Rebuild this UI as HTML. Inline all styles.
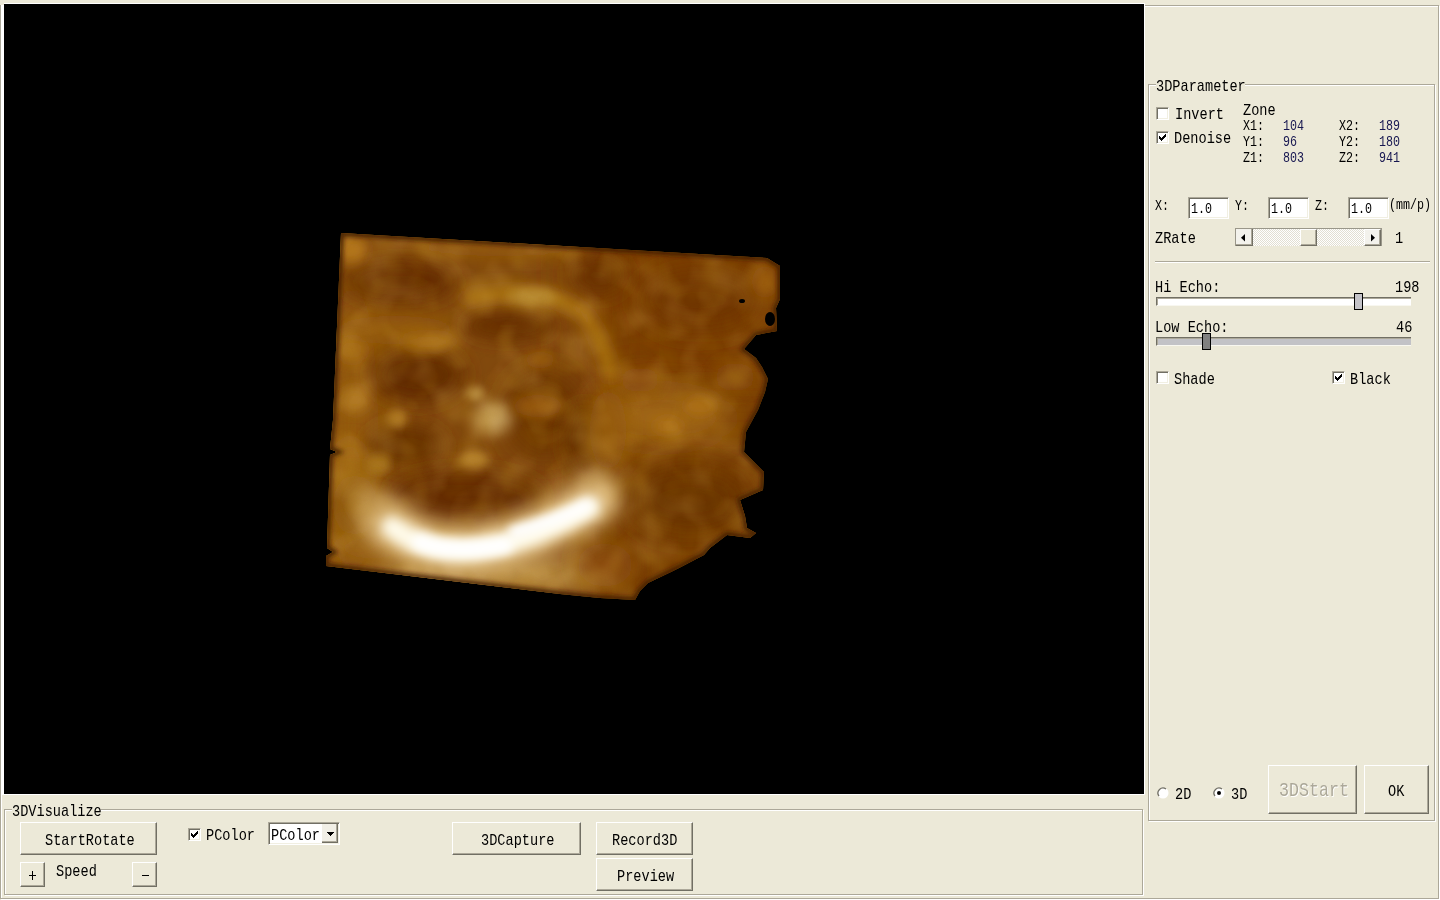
<!DOCTYPE html><html><head><meta charset="utf-8"><style>
html,body{margin:0;padding:0}
body{width:1440px;height:900px;position:relative;overflow:hidden;background:#ECE9D8;font-family:"Liberation Mono",monospace}
body>div,body>svg{position:absolute}
.t{white-space:pre;transform-origin:0 0}
</style></head><body>
<div style="left:1px;top:6px;width:1439px;height:894px;border:1px solid #fff;box-sizing:border-box"></div>
<div style="left:0px;top:5px;width:1439px;height:894px;border:1px solid #ACA899;box-sizing:border-box"></div>
<div style="left:4px;top:3px;width:1141px;height:792px;background:#fff"></div>
<div style="left:1px;top:5px;width:3px;height:790px;background:#fff"></div>
<div style="left:4px;top:4px;width:1140px;height:790px;background:#000"></div>
<svg style="left:300px;top:200px" width="520" height="440" viewBox="300 200 520 440">
<defs>
<clipPath id="vc"><polygon points="341,233 767,258 780,266 780,299 776,308 777,331 756,335 744,349 756,358 762,367 768,379 765,392 758,410 746,432 744,452 764,472 763,490 740,500 745,516 747,528 756,533 750,538 727,535 710,548 704,555 681,567 671,572 648,583 640,591 635,600 600,598 560,594 326,566 326,556 333,552 327,548 330,455 337,452 330,449 333,420"/></clipPath>
<filter id="f36" filterUnits="userSpaceOnUse" x="300" y="200" width="520" height="440"><feGaussianBlur stdDeviation="36"/></filter>
<filter id="f14" filterUnits="userSpaceOnUse" x="300" y="200" width="520" height="440"><feGaussianBlur stdDeviation="14"/></filter>
<filter id="f12" filterUnits="userSpaceOnUse" x="300" y="200" width="520" height="440"><feGaussianBlur stdDeviation="12"/></filter>
<filter id="f11" filterUnits="userSpaceOnUse" x="300" y="200" width="520" height="440"><feGaussianBlur stdDeviation="11"/></filter>
<filter id="f10" filterUnits="userSpaceOnUse" x="300" y="200" width="520" height="440"><feGaussianBlur stdDeviation="10"/></filter>
<filter id="f9" filterUnits="userSpaceOnUse" x="300" y="200" width="520" height="440"><feGaussianBlur stdDeviation="9"/></filter>
<filter id="f8" filterUnits="userSpaceOnUse" x="300" y="200" width="520" height="440"><feGaussianBlur stdDeviation="8"/></filter>
<filter id="f7" filterUnits="userSpaceOnUse" x="300" y="200" width="520" height="440"><feGaussianBlur stdDeviation="7"/></filter>
<filter id="f6" filterUnits="userSpaceOnUse" x="300" y="200" width="520" height="440"><feGaussianBlur stdDeviation="6"/></filter>
<filter id="f5" filterUnits="userSpaceOnUse" x="300" y="200" width="520" height="440"><feGaussianBlur stdDeviation="5"/></filter>
<filter id="f4" filterUnits="userSpaceOnUse" x="300" y="200" width="520" height="440"><feGaussianBlur stdDeviation="4"/></filter>
<filter id="f2" filterUnits="userSpaceOnUse" x="300" y="200" width="520" height="440"><feGaussianBlur stdDeviation="2"/></filter>
<filter id="turb" filterUnits="userSpaceOnUse" x="300" y="200" width="520" height="440"><feTurbulence type="fractalNoise" baseFrequency="0.03" numOctaves="2" seed="7"/><feColorMatrix type="matrix" values="0 0 0 0 0.82  0 0 0 0 0.52  0 0 0 0 0.1  2.6 0 0 0 -1.05"/></filter>
<filter id="turb2" filterUnits="userSpaceOnUse" x="300" y="200" width="520" height="440"><feTurbulence type="fractalNoise" baseFrequency="0.04" numOctaves="2" seed="23"/><feColorMatrix type="matrix" values="0 0 0 0 0.3  0 0 0 0 0.12  0 0 0 0 0  2.6 0 0 0 -1.05"/></filter>
</defs><g clip-path="url(#vc)">
<rect x="300" y="200" width="520" height="440" fill="#7a4008"/>
<g filter="url(#f36)"><rect x="250" y="150" width="350" height="540" fill="#824808"/></g>
<g filter="url(#f36)"><rect x="600" y="150" width="270" height="250" fill="#7a3e06"/></g>
<g filter="url(#f36)"><rect x="620" y="430" width="250" height="250" fill="#763a06"/></g>
<g filter="url(#f14)"><ellipse cx="660" cy="418" rx="72" ry="28" fill="#a06612" opacity="1"/></g>
<g filter="url(#f14)"><ellipse cx="352" cy="430" rx="26" ry="150" fill="#945a0c" opacity="1"/></g>
<g filter="url(#f10)"><ellipse cx="400" cy="282" rx="55" ry="20" fill="#642c02" opacity="1"/></g>
<g filter="url(#f8)"><ellipse cx="509" cy="326" rx="45" ry="14" fill="#662e02" opacity="1"/></g>
<g filter="url(#f10)"><ellipse cx="418" cy="375" rx="46" ry="28" fill="#622c02" opacity="1"/></g>
<g filter="url(#f14)"><ellipse cx="545" cy="415" rx="40" ry="45" fill="#6c3404" opacity="1"/></g>
<g filter="url(#f9)"><ellipse cx="405" cy="446" rx="40" ry="22" fill="#683002" opacity="1"/></g>
<g filter="url(#f10)"><ellipse cx="466" cy="497" rx="78" ry="26" fill="#642c02" opacity="1"/></g>
<g filter="url(#f10)"><ellipse cx="598" cy="275" rx="28" ry="20" fill="#6a3204" opacity="1"/></g>
<g filter="url(#f10)"><ellipse cx="585" cy="440" rx="18" ry="35" fill="#663002" opacity="1"/></g>
<g filter="url(#f14)"><ellipse cx="700" cy="300" rx="60" ry="30" fill="#703604" opacity="1"/></g>
<g filter="url(#f14)"><ellipse cx="690" cy="500" rx="60" ry="35" fill="#6a3404" opacity="1"/></g>
<g filter="url(#f7)"><ellipse cx="352" cy="250" rx="16" ry="14" fill="#b87a1c" opacity="1"/></g>
<g filter="url(#f8)"><ellipse cx="500" cy="247" rx="90" ry="9" fill="#945a0c" opacity="1"/></g>
<g filter="url(#f9)"><ellipse cx="395" cy="330" rx="60" ry="14" fill="#965c0e" opacity="1"/></g>
<g filter="url(#f6)"><ellipse cx="428" cy="342" rx="28" ry="9" fill="#a86e14" opacity="1"/></g>
<g filter="url(#f7)"><path d="M468 298 Q540 285 580 310 Q600 330 612 378" stroke="#b07818" stroke-width="14" fill="none" stroke-linecap="round" opacity="1"/></g>
<g filter="url(#f5)"><ellipse cx="532" cy="297" rx="24" ry="9" fill="#b88a30" opacity="1"/></g>
<g filter="url(#f6)"><ellipse cx="355" cy="400" rx="14" ry="12" fill="#b07820" opacity="1"/></g>
<g filter="url(#f6)"><ellipse cx="352" cy="350" rx="14" ry="12" fill="#a86e18" opacity="1"/></g>
<g filter="url(#f8)"><ellipse cx="350" cy="470" rx="16" ry="32" fill="#a46c14" opacity="1"/></g>
<g filter="url(#f8)"><ellipse cx="345" cy="530" rx="14" ry="20" fill="#9a6210" opacity="1"/></g>
<g filter="url(#f7)"><ellipse cx="493" cy="418" rx="18" ry="16" fill="#c4a060" opacity="1"/></g>
<g filter="url(#f4)"><ellipse cx="475" cy="394" rx="10" ry="8" fill="#b88c3c" opacity="1"/></g>
<g filter="url(#f4)"><ellipse cx="398" cy="418" rx="10" ry="8" fill="#ac7420" opacity="1"/></g>
<g filter="url(#f5)"><ellipse cx="473" cy="460" rx="15" ry="10" fill="#b07c28" opacity="1"/></g>
<g filter="url(#f5)"><ellipse cx="378" cy="464" rx="13" ry="9" fill="#a8741c" opacity="1"/></g>
<g filter="url(#f6)"><ellipse cx="538" cy="406" rx="24" ry="11" fill="#96580c" opacity="1"/></g>
<g filter="url(#f9)"><ellipse cx="608" cy="430" rx="18" ry="40" fill="#965c0e" opacity="1"/></g>
<g filter="url(#f5)"><ellipse cx="700" cy="406" rx="16" ry="10" fill="#ac7016" opacity="1"/></g>
<g filter="url(#f5)"><ellipse cx="668" cy="426" rx="15" ry="9" fill="#ac7016" opacity="1"/></g>
<g filter="url(#f6)"><ellipse cx="765" cy="282" rx="13" ry="16" fill="#9a5c0e" opacity="1"/></g>
<g filter="url(#f8)"><ellipse cx="735" cy="377" rx="20" ry="14" fill="#8e520a" opacity="1"/></g>
<g filter="url(#f8)"><ellipse cx="640" cy="380" rx="20" ry="12" fill="#8a4c0a" opacity="1"/></g>
<g filter="url(#f5)"><ellipse cx="540" cy="360" rx="14" ry="8" fill="#94580c" opacity="1"/></g>
<g filter="url(#f10)"><ellipse cx="490" cy="574" rx="115" ry="18" fill="#b88c44" opacity="1"/></g>
<g filter="url(#f8)"><ellipse cx="372" cy="548" rx="36" ry="16" fill="#9a6212" opacity="1"/></g>
<g filter="url(#f10)"><ellipse cx="355" cy="505" rx="22" ry="30" fill="#8e5810" opacity="1"/></g>
<g filter="url(#f10)"><ellipse cx="605" cy="565" rx="28" ry="22" fill="#8a4c08" opacity="1"/></g>
<g filter="url(#f12)"><path d="M382 518 C405 540 440 552 470 548 C520 542 565 520 598 496" stroke="#d4b070" stroke-width="42" fill="none" stroke-linecap="round" opacity="1"/></g>
<g filter="url(#f8)"><path d="M366 500 C375 512 385 522 395 528" stroke="#b88a40" stroke-width="24" fill="none" stroke-linecap="round" opacity="1"/></g>
<g filter="url(#f9)"><ellipse cx="596" cy="495" rx="14" ry="22" fill="#c8a060" opacity="1"/></g>
<rect x="300" y="200" width="520" height="440" filter="url(#turb)" opacity="0.2"/>
<rect x="300" y="200" width="520" height="440" filter="url(#turb2)" opacity="0.2"/>
<g filter="url(#f11)"><path d="M385 520 C410 545 440 553 470 550 C520 545 565 522 596 500" stroke="#e8c890" stroke-width="36" fill="none" stroke-linecap="round" opacity="0.7"/></g>
<g filter="url(#f6)"><path d="M392 527 C415 545 440 552 470 550 C520 545 560 524 590 507" stroke="#fffbea" stroke-width="22" fill="none" stroke-linecap="round"/></g>
<g filter="url(#f5)"><path d="M420 542 C440 550 470 551 505 545" stroke="#ffffff" stroke-width="16" fill="none" stroke-linecap="round"/></g>
<g filter="url(#f5)"><path d="M515 532 C545 524 570 514 586 506" stroke="#ffffff" stroke-width="13" fill="none" stroke-linecap="round"/></g>
<g filter="url(#f2)"><polygon points="341,233 767,258 780,266 780,299 776,308 777,331 756,335 744,349 756,358 762,367 768,379 765,392 758,410 746,432 744,452 764,472 763,490 740,500 745,516 747,528 756,533 750,538 727,535 710,548 704,555 681,567 671,572 648,583 640,591 635,600 600,598 560,594 326,566 326,556 333,552 327,548 330,455 337,452 330,449 333,420" fill="none" stroke="#3c1a02" stroke-width="6" opacity="0.8"/></g>
<ellipse cx="742" cy="301" rx="3" ry="2" fill="#000"/>
<ellipse cx="770" cy="319" rx="5" ry="7" fill="#000"/>
</g></svg>
<div style="left:5px;top:810px;width:1139px;height:86px;border:1px solid #fff;box-sizing:border-box"></div>
<div style="left:4px;top:809px;width:1139px;height:86px;border:1px solid #ACA899;box-sizing:border-box"></div>
<div style="left:12px;top:800px;width:89px;height:16px;background:#ECE9D8"></div>
<div class="t" style="left:12px;top:803.17px;font-size:17px;line-height:17px;transform:scaleX(0.8);color:#000;">3DVisualize</div>
<div style="left:1149px;top:85px;width:287px;height:737px;border:1px solid #fff;box-sizing:border-box"></div>
<div style="left:1148px;top:84px;width:287px;height:737px;border:1px solid #ACA899;box-sizing:border-box"></div>
<div style="left:1156px;top:76px;width:89px;height:16px;background:#ECE9D8"></div>
<div class="t" style="left:1156px;top:78.17px;font-size:17px;line-height:17px;transform:scaleX(0.8);color:#000;">3DParameter</div>
<div style="left:1156px;top:107px;width:13px;height:13px;background:#fff;border-top:1px solid #ACA899;border-left:1px solid #ACA899;border-right:1px solid #fff;border-bottom:1px solid #fff;box-sizing:border-box;box-shadow:inset 1px 1px 0 #716F64, inset -1px -1px 0 #F1EFE2"></div>
<div class="t" style="left:1175px;top:106.17px;font-size:17px;line-height:17px;transform:scaleX(0.8);color:#000;">Invert</div>
<div style="left:1156px;top:131px;width:13px;height:13px;background:#fff;border-top:1px solid #ACA899;border-left:1px solid #ACA899;border-right:1px solid #fff;border-bottom:1px solid #fff;box-sizing:border-box;box-shadow:inset 1px 1px 0 #716F64, inset -1px -1px 0 #F1EFE2"></div>
<svg style="left:1156px;top:131px" width="13" height="13" shape-rendering="crispEdges"><path d="M3 5h1v3h-1zM4 6h1v3h-1zM5 7h1v3h-1zM6 6h1v3h-1zM7 5h1v3h-1zM8 4h1v3h-1zM9 3h1v3h-1z" fill="#000"/></svg>
<div class="t" style="left:1174px;top:130.17px;font-size:17px;line-height:17px;transform:scaleX(0.8);color:#000;">Denoise</div>
<div class="t" style="left:1243px;top:102.17px;font-size:17px;line-height:17px;transform:scaleX(0.8);color:#000;">Zone</div>
<div class="t" style="left:1243px;top:119.14px;font-size:14.5px;line-height:14.5px;transform:scaleX(0.805);color:#000;">X1:</div>
<div class="t" style="left:1283px;top:119.14px;font-size:14.5px;line-height:14.5px;transform:scaleX(0.805);color:#161650;">104</div>
<div class="t" style="left:1339px;top:119.14px;font-size:14.5px;line-height:14.5px;transform:scaleX(0.805);color:#000;">X2:</div>
<div class="t" style="left:1379px;top:119.14px;font-size:14.5px;line-height:14.5px;transform:scaleX(0.805);color:#161650;">189</div>
<div class="t" style="left:1243px;top:135.14px;font-size:14.5px;line-height:14.5px;transform:scaleX(0.805);color:#000;">Y1:</div>
<div class="t" style="left:1283px;top:135.14px;font-size:14.5px;line-height:14.5px;transform:scaleX(0.805);color:#161650;">96</div>
<div class="t" style="left:1339px;top:135.14px;font-size:14.5px;line-height:14.5px;transform:scaleX(0.805);color:#000;">Y2:</div>
<div class="t" style="left:1379px;top:135.14px;font-size:14.5px;line-height:14.5px;transform:scaleX(0.805);color:#161650;">180</div>
<div class="t" style="left:1243px;top:151.14px;font-size:14.5px;line-height:14.5px;transform:scaleX(0.805);color:#000;">Z1:</div>
<div class="t" style="left:1283px;top:151.14px;font-size:14.5px;line-height:14.5px;transform:scaleX(0.805);color:#161650;">803</div>
<div class="t" style="left:1339px;top:151.14px;font-size:14.5px;line-height:14.5px;transform:scaleX(0.805);color:#000;">Z2:</div>
<div class="t" style="left:1379px;top:151.14px;font-size:14.5px;line-height:14.5px;transform:scaleX(0.805);color:#161650;">941</div>
<div class="t" style="left:1155px;top:199.14px;font-size:14.5px;line-height:14.5px;transform:scaleX(0.805);color:#000;">X:</div>
<div style="left:1188px;top:197px;width:41px;height:22px;background:#fff;border-top:1px solid #ACA899;border-left:1px solid #ACA899;border-right:1px solid #fff;border-bottom:1px solid #fff;box-sizing:border-box;box-shadow:inset 1px 1px 0 #716F64, inset -1px -1px 0 #F1EFE2"></div>
<div class="t" style="left:1191px;top:202.14px;font-size:14.5px;line-height:14.5px;transform:scaleX(0.805);color:#000;">1.0</div>
<div class="t" style="left:1235px;top:199.14px;font-size:14.5px;line-height:14.5px;transform:scaleX(0.805);color:#000;">Y:</div>
<div style="left:1268px;top:197px;width:41px;height:22px;background:#fff;border-top:1px solid #ACA899;border-left:1px solid #ACA899;border-right:1px solid #fff;border-bottom:1px solid #fff;box-sizing:border-box;box-shadow:inset 1px 1px 0 #716F64, inset -1px -1px 0 #F1EFE2"></div>
<div class="t" style="left:1271px;top:202.14px;font-size:14.5px;line-height:14.5px;transform:scaleX(0.805);color:#000;">1.0</div>
<div class="t" style="left:1315px;top:199.14px;font-size:14.5px;line-height:14.5px;transform:scaleX(0.805);color:#000;">Z:</div>
<div style="left:1348px;top:197px;width:41px;height:22px;background:#fff;border-top:1px solid #ACA899;border-left:1px solid #ACA899;border-right:1px solid #fff;border-bottom:1px solid #fff;box-sizing:border-box;box-shadow:inset 1px 1px 0 #716F64, inset -1px -1px 0 #F1EFE2"></div>
<div class="t" style="left:1351px;top:202.14px;font-size:14.5px;line-height:14.5px;transform:scaleX(0.805);color:#000;">1.0</div>
<div class="t" style="left:1389px;top:198.14px;font-size:14.5px;line-height:14.5px;transform:scaleX(0.805);color:#000;">(mm/p)</div>
<div class="t" style="left:1155px;top:230.17px;font-size:17px;line-height:17px;transform:scaleX(0.8);color:#000;">ZRate</div>
<div style="left:1235px;top:228px;width:147px;height:18px;background:repeating-conic-gradient(#fff 0 25%, #E2DFD2 0 50%) 0 0/2px 2px;border-top:1px solid #9A978A;border-right:1px solid #9A978A;box-sizing:border-box"></div>
<div style="left:1235px;top:228px;width:18px;height:18px;background:#F3F2EC;border-top:1px solid #fff;border-left:1px solid #fff;border-right:1px solid #716F64;border-bottom:1px solid #716F64;box-sizing:border-box;box-shadow:inset -1px -1px 0 #ACA899"></div>
<div style="left:1235px;top:228px;width:18px;height:1px;background:#9A978A"></div>
<div style="left:1235px;top:228px;width:1px;height:18px;background:#9A978A"></div>
<svg style="left:1235px;top:228px" width="18" height="18"><path d="M10 6 L10 13.5 L6 9.75 Z" fill="#000"/></svg>
<div style="left:1300px;top:229px;width:17px;height:17px;background:#ECE9D8;border-top:1px solid #fff;border-left:1px solid #fff;border-right:1px solid #716F64;border-bottom:1px solid #716F64;box-sizing:border-box;box-shadow:inset -1px -1px 0 #ACA899"></div>
<div style="left:1364px;top:229px;width:17px;height:17px;background:#F3F2EC;border-top:1px solid #fff;border-left:1px solid #fff;border-right:1px solid #716F64;border-bottom:1px solid #716F64;box-sizing:border-box;box-shadow:inset -1px -1px 0 #ACA899"></div>
<svg style="left:1364px;top:228px" width="18" height="18"><path d="M7 6 L7 13.5 L11 9.75 Z" fill="#000"/></svg>
<div class="t" style="left:1395px;top:230.17px;font-size:17px;line-height:17px;transform:scaleX(0.8);color:#000;">1</div>
<div style="left:1155px;top:261px;width:275px;height:1px;background:#ACA899"></div>
<div style="left:1155px;top:262px;width:275px;height:1px;background:#fff"></div>
<div class="t" style="left:1155px;top:279.17px;font-size:17px;line-height:17px;transform:scaleX(0.8);color:#000;">Hi Echo:</div>
<div class="t" style="left:1395px;top:279.17px;font-size:17px;line-height:17px;transform:scaleX(0.8);color:#000;">198</div>
<div style="left:1156px;top:297px;width:255px;height:9px;background:#fff;border-top:1px solid #716F64;border-left:1px solid #716F64;border-bottom:1px solid #F8F7F0;box-sizing:border-box;box-shadow:inset 1px 1px 0 #ACA899"></div>
<div style="left:1354px;top:293px;width:9px;height:17px;background:#C4C3C8;border:1px solid #000;box-sizing:border-box"></div>
<div class="t" style="left:1155px;top:319.17px;font-size:17px;line-height:17px;transform:scaleX(0.8);color:#000;">Low Echo:</div>
<div class="t" style="left:1396px;top:319.17px;font-size:17px;line-height:17px;transform:scaleX(0.8);color:#000;">46</div>
<div style="left:1156px;top:337px;width:255px;height:9px;background:#C2C2C6;border-top:1px solid #716F64;border-left:1px solid #716F64;border-bottom:1px solid #F8F7F0;box-sizing:border-box;box-shadow:inset 1px 1px 0 #ACA899"></div>
<div style="left:1202px;top:333px;width:9px;height:17px;background:#808080;border:1px solid #000;box-sizing:border-box"></div>
<div style="left:1156px;top:371px;width:13px;height:13px;background:#fff;border-top:1px solid #ACA899;border-left:1px solid #ACA899;border-right:1px solid #fff;border-bottom:1px solid #fff;box-sizing:border-box;box-shadow:inset 1px 1px 0 #716F64, inset -1px -1px 0 #F1EFE2"></div>
<div class="t" style="left:1174px;top:371.17px;font-size:17px;line-height:17px;transform:scaleX(0.8);color:#000;">Shade</div>
<div style="left:1332px;top:371px;width:13px;height:13px;background:#fff;border-top:1px solid #ACA899;border-left:1px solid #ACA899;border-right:1px solid #fff;border-bottom:1px solid #fff;box-sizing:border-box;box-shadow:inset 1px 1px 0 #716F64, inset -1px -1px 0 #F1EFE2"></div>
<svg style="left:1332px;top:371px" width="13" height="13" shape-rendering="crispEdges"><path d="M3 5h1v3h-1zM4 6h1v3h-1zM5 7h1v3h-1zM6 6h1v3h-1zM7 5h1v3h-1zM8 4h1v3h-1zM9 3h1v3h-1z" fill="#000"/></svg>
<div class="t" style="left:1350px;top:371.17px;font-size:17px;line-height:17px;transform:scaleX(0.8);color:#000;">Black</div>
<svg style="left:1157px;top:787px" width="13" height="13"><circle cx="6" cy="6" r="5.5" fill="#fff"/><path d="M2 9 A5 5 0 0 1 9 2" stroke="#716F64" stroke-width="1.3" fill="none"/></svg>
<div class="t" style="left:1175px;top:786.17px;font-size:17px;line-height:17px;transform:scaleX(0.8);color:#000;">2D</div>
<svg style="left:1213px;top:787px" width="13" height="13"><circle cx="6" cy="6" r="5.5" fill="#fff"/><path d="M2 9 A5 5 0 0 1 9 2" stroke="#716F64" stroke-width="1.3" fill="none"/><circle cx="6" cy="6" r="2" fill="#000"/></svg>
<div class="t" style="left:1231px;top:786.17px;font-size:17px;line-height:17px;transform:scaleX(0.8);color:#000;">3D</div>
<div style="left:1268px;top:765px;width:89px;height:49px;background:#ECE9D8;border-top:1px solid #fff;border-left:1px solid #fff;border-right:1px solid #716F64;border-bottom:1px solid #716F64;box-sizing:border-box;box-shadow:inset -1px -1px 0 #ACA899"></div>
<div class="t" style="left:1279px;top:780.82px;font-size:20.3px;line-height:20.3px;transform:scaleX(0.82);color:#ACA899;text-shadow:1px 1px 0 #fff">3DStart</div>
<div style="left:1364px;top:765px;width:65px;height:49px;background:#ECE9D8;border-top:1px solid #fff;border-left:1px solid #fff;border-right:1px solid #716F64;border-bottom:1px solid #716F64;box-sizing:border-box;box-shadow:inset -1px -1px 0 #ACA899"></div>
<div class="t" style="left:1388px;top:783.17px;font-size:17px;line-height:17px;transform:scaleX(0.8);color:#000;">OK</div>
<div style="left:20px;top:822px;width:137px;height:33px;background:#ECE9D8;border-top:1px solid #fff;border-left:1px solid #fff;border-right:1px solid #716F64;border-bottom:1px solid #716F64;box-sizing:border-box;box-shadow:inset -1px -1px 0 #ACA899"></div>
<div class="t" style="left:45px;top:832.17px;font-size:17px;line-height:17px;transform:scaleX(0.8);color:#000;">StartRotate</div>
<div style="left:20px;top:862px;width:25px;height:25px;background:#ECE9D8;border-top:1px solid #fff;border-left:1px solid #fff;border-right:1px solid #716F64;border-bottom:1px solid #716F64;box-sizing:border-box;box-shadow:inset -1px -1px 0 #ACA899"></div>
<div style="left:32px;top:871px;width:1px;height:9px;background:#000"></div>
<div style="left:29px;top:875px;width:7px;height:1px;background:#000"></div>
<div class="t" style="left:56px;top:863.17px;font-size:17px;line-height:17px;transform:scaleX(0.8);color:#000;">Speed</div>
<div style="left:132px;top:862px;width:25px;height:25px;background:#ECE9D8;border-top:1px solid #fff;border-left:1px solid #fff;border-right:1px solid #716F64;border-bottom:1px solid #716F64;box-sizing:border-box;box-shadow:inset -1px -1px 0 #ACA899"></div>
<div style="left:142px;top:875px;width:7px;height:1px;background:#000"></div>
<div style="left:188px;top:828px;width:13px;height:13px;background:#fff;border-top:1px solid #ACA899;border-left:1px solid #ACA899;border-right:1px solid #fff;border-bottom:1px solid #fff;box-sizing:border-box;box-shadow:inset 1px 1px 0 #716F64, inset -1px -1px 0 #F1EFE2"></div>
<svg style="left:188px;top:828px" width="13" height="13" shape-rendering="crispEdges"><path d="M3 5h1v3h-1zM4 6h1v3h-1zM5 7h1v3h-1zM6 6h1v3h-1zM7 5h1v3h-1zM8 4h1v3h-1zM9 3h1v3h-1z" fill="#000"/></svg>
<div class="t" style="left:206px;top:827.17px;font-size:17px;line-height:17px;transform:scaleX(0.8);color:#000;">PColor</div>
<div style="left:268px;top:822px;width:72px;height:23px;background:#fff;border-top:1px solid #ACA899;border-left:1px solid #ACA899;border-right:1px solid #fff;border-bottom:1px solid #fff;box-sizing:border-box;box-shadow:inset 1px 1px 0 #716F64, inset -1px -1px 0 #F1EFE2"></div>
<div class="t" style="left:271px;top:827.17px;font-size:17px;line-height:17px;transform:scaleX(0.8);color:#000;">PColor</div>
<div style="left:322px;top:824px;width:16px;height:19px;background:#F1EFE6;border-right:1px solid #716F64;border-bottom:1px solid #716F64;box-sizing:border-box;box-shadow:inset -1px -1px 0 #ACA899"></div>
<svg style="left:322px;top:824px" width="16" height="19" shape-rendering="crispEdges"><path d="M5 8h7v1h-7zM6 9h5v1h-5zM7 10h3v1h-3zM8 11h1v1h-1z" fill="#000"/></svg>
<div style="left:452px;top:822px;width:129px;height:33px;background:#ECE9D8;border-top:1px solid #fff;border-left:1px solid #fff;border-right:1px solid #716F64;border-bottom:1px solid #716F64;box-sizing:border-box;box-shadow:inset -1px -1px 0 #ACA899"></div>
<div class="t" style="left:481px;top:832.17px;font-size:17px;line-height:17px;transform:scaleX(0.8);color:#000;">3DCapture</div>
<div style="left:596px;top:822px;width:97px;height:33px;background:#ECE9D8;border-top:1px solid #fff;border-left:1px solid #fff;border-right:1px solid #716F64;border-bottom:1px solid #716F64;box-sizing:border-box;box-shadow:inset -1px -1px 0 #ACA899"></div>
<div class="t" style="left:612px;top:832.17px;font-size:17px;line-height:17px;transform:scaleX(0.8);color:#000;">Record3D</div>
<div style="left:596px;top:858px;width:97px;height:33px;background:#ECE9D8;border-top:1px solid #fff;border-left:1px solid #fff;border-right:1px solid #716F64;border-bottom:1px solid #716F64;box-sizing:border-box;box-shadow:inset -1px -1px 0 #ACA899"></div>
<div class="t" style="left:617px;top:868.17px;font-size:17px;line-height:17px;transform:scaleX(0.8);color:#000;">Preview</div>
</body></html>
